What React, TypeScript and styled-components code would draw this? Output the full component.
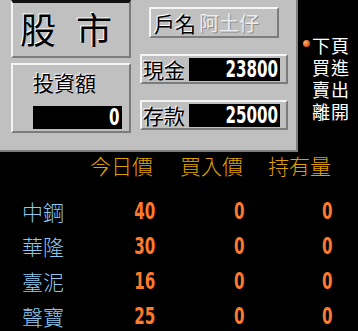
import styled, { createGlobalStyle } from 'styled-components';

const CJK = `"Noto Sans CJK TC", "Noto Sans CJK JP", sans-serif`;
const DIGIT = `"DejaVu Sans", sans-serif`;

const GlobalStyle = createGlobalStyle`
  html, body {
    margin: 0;
    padding: 0;
    background: #000;
  }
`;

type Stock = { name: string; today: number; bought: number; held: number };

const stocks: Stock[] = [
  { name: '中鋼', today: 40, bought: 0, held: 0 },
  { name: '華隆', today: 30, bought: 0, held: 0 },
  { name: '臺泥', today: 16, bought: 0, held: 0 },
  { name: '聲寶', today: 25, bought: 0, held: 0 },
];

const menu = ['下頁', '買進', '賣出', '離開'];

const App = () => {
  return (
    <Screen>
      <GlobalStyle />
      <Top>
        <Panel>
          <LeftCol>
            <TitleBox>
              <Title>股</Title>
              <Title>市</Title>
            </TitleBox>
            <InvestBox>
              <Label>投資額</Label>
              <Field>
                <Digits>0</Digits>
              </Field>
            </InvestBox>
          </LeftCol>
          <RightCol>
            <NameBox>
              <Label>戶名</Label>
              <PlayerName>阿土仔</PlayerName>
            </NameBox>
            <MoneyBox>
              <Label>現金</Label>
              <Field>
                <Digits>23800</Digits>
              </Field>
            </MoneyBox>
            <MoneyBox>
              <Label>存款</Label>
              <Field>
                <Digits>25000</Digits>
              </Field>
            </MoneyBox>
          </RightCol>
        </Panel>
        <Menu>
          <Dot />
          <MenuList>
            {menu.map(item => (
              <MenuItem key={item}>{item}</MenuItem>
            ))}
          </MenuList>
        </Menu>
      </Top>
      <Table>
        <HeadRow>
          <span />
          <Head>今日價</Head>
          <Head>買入價</Head>
          <Head>持有量</Head>
        </HeadRow>
        {stocks.map(stock => (
          <Row key={stock.name}>
            <StockName>{stock.name}</StockName>
            <Num>
              <Digits>{stock.today}</Digits>
            </Num>
            <Num>
              <Digits>{stock.bought}</Digits>
            </Num>
            <Num>
              <Digits>{stock.held}</Digits>
            </Num>
          </Row>
        ))}
      </Table>
    </Screen>
  );
};

const Screen = styled.div`
  width: 358px;
  height: 331px;
  overflow: hidden;
  background: #000;
  font-family: ${CJK};
`;

const Top = styled.div`
  display: flex;
  height: 152px;
`;

const Panel = styled.div`
  box-sizing: border-box;
  width: 298px;
  height: 152px;
  display: flex;
  padding-left: 11px;
  background: #c0c0c0;
  border-right: 2px solid #808080;
  border-bottom: 2px solid #7c7c7c;
`;

const LeftCol = styled.div`
  width: 120px;
  display: flex;
  flex-direction: column;
  gap: 5px;
`;

const RightCol = styled.div`
  width: 148px;
  margin-left: 9px;
  padding-top: 7px;
  display: flex;
  flex-direction: column;
  align-items: center;
  gap: 16px;
`;

const Raised = styled.div`
  box-sizing: border-box;
  background: #c0c0c0;
  border-top: 2px solid #f4f4f4;
  border-left: 2px solid #f4f4f4;
  border-right: 2px solid #7c7c7c;
  border-bottom: 2px solid #7c7c7c;
`;

const TitleBox = styled(Raised)`
  height: 58px;
  display: flex;
  justify-content: center;
  align-items: center;
  gap: 20px;
  border-top: 3px solid #111;
  padding: 0 10px 3px 0;
`;

const Title = styled.span`
  font-size: 36px;
  line-height: 1;
  color: #000;
  text-shadow: -1px -1px 0 #fff;
`;

const InvestBox = styled(Raised)`
  height: 70px;
  display: flex;
  flex-direction: column;
  justify-content: space-between;
  padding: 5px 7px 2px 20px;
`;

const Label = styled.span`
  font-size: 21px;
  line-height: 24px;
  color: #000;
  text-shadow: -1px -1px 0 #fff;
  white-space: nowrap;
`;

const Digits = styled.span`
  display: inline-block;
  font-family: ${DIGIT};
  font-weight: bold;
  font-size: 21px;
  transform: scale(0.72, 1.08);
  transform-origin: right center;
`;

const Field = styled.div`
  box-sizing: border-box;
  height: 23px;
  padding-right: 2px;
  background: #000;
  color: #fff;
  line-height: 23px;
  text-align: right;
`;

const NameBox = styled(Raised)`
  width: 130px;
  height: 31px;
  display: flex;
  align-items: center;
  gap: 3px;
  padding-left: 3px;
`;

const PlayerName = styled.span`
  font-size: 20px;
  line-height: 24px;
  color: #ececec;
  text-shadow: 1px 1px 0 #8c8c8c;
`;

const MoneyBox = styled(Raised)`
  width: 148px;
  height: 30px;
  display: flex;
  align-items: center;
  gap: 4px;
  padding: 0 6px 0 1px;

  ${Field} {
    flex: 1;
  }
`;

const Menu = styled.div`
  flex: 1;
  display: flex;
  align-items: flex-start;
  padding: 36px 0 0 5px;
`;

const Dot = styled.div`
  width: 7px;
  height: 7px;
  margin-top: 4px;
  border-radius: 50%;
  background: radial-gradient(circle at 35% 35%, #ffb070, #e05010 70%);
`;

const MenuList = styled.div`
  margin-left: 2px;
  display: flex;
  flex-direction: column;
  gap: 3px;
`;

const MenuItem = styled.span`
  color: #fff;
  font-size: 18px;
  line-height: 19px;
  letter-spacing: 1px;
`;

const Table = styled.div`
  display: flex;
  flex-direction: column;
  padding-left: 22px;
`;

const HeadRow = styled.div`
  display: grid;
  grid-template-columns: 44px 89px 90px 88px;
  height: 26px;
  margin-bottom: 16px;
`;

const Head = styled.span`
  color: #e0a000;
  font-size: 21px;
  line-height: 26px;
  font-weight: 300;
  text-align: right;
  white-space: nowrap;
  margin-right: 2px;
`;

const Row = styled.div`
  display: grid;
  grid-template-columns: 44px 89px 90px 88px;
  height: 35px;
  align-items: center;
`;

const StockName = styled.span`
  color: #8cc8f0;
  font-size: 21px;
  line-height: 35px;
  font-weight: 300;
  white-space: nowrap;
`;

const Num = styled.span`
  color: #ff7a2c;
  line-height: 35px;
  text-align: right;
`;

export default App;
